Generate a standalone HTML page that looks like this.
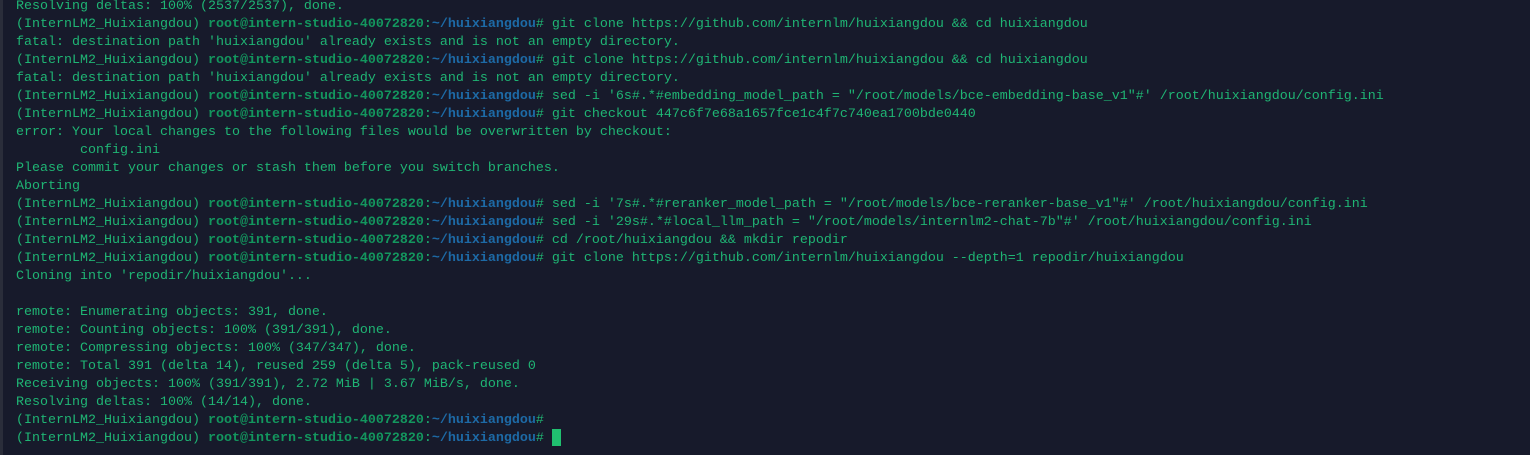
<!DOCTYPE html>
<html><head><meta charset="utf-8"><style>
html,body{margin:0;padding:0;width:1530px;height:455px;overflow:hidden;background:#171a2b;}
body{border-left:3px solid #2a2d3a;box-sizing:border-box;}
pre{margin:0;position:absolute;left:16px;top:-2px;font-family:"Liberation Mono",monospace;font-size:13.33px;line-height:18px;color:#1fb574;}
.u{color:#13965e;font-weight:bold}
.p{color:#1d6aa6;font-weight:bold}
.c{position:absolute;display:block;width:9px;height:17px;background:#20c070;left:536px;top:431px}
</style></head><body><pre>Resolving deltas: 100% (2537/2537), done.
(InternLM2_Huixiangdou) <span class="u">root@intern-studio-40072820</span>:<span class="p">~/huixiangdou</span># git clone https://github.com/internlm/huixiangdou &amp;&amp; cd huixiangdou
fatal: destination path 'huixiangdou' already exists and is not an empty directory.
(InternLM2_Huixiangdou) <span class="u">root@intern-studio-40072820</span>:<span class="p">~/huixiangdou</span># git clone https://github.com/internlm/huixiangdou &amp;&amp; cd huixiangdou
fatal: destination path 'huixiangdou' already exists and is not an empty directory.
(InternLM2_Huixiangdou) <span class="u">root@intern-studio-40072820</span>:<span class="p">~/huixiangdou</span># sed -i '6s#.*#embedding_model_path = "/root/models/bce-embedding-base_v1"#' /root/huixiangdou/config.ini
(InternLM2_Huixiangdou) <span class="u">root@intern-studio-40072820</span>:<span class="p">~/huixiangdou</span># git checkout 447c6f7e68a1657fce1c4f7c740ea1700bde0440
error: Your local changes to the following files would be overwritten by checkout:
        config.ini
Please commit your changes or stash them before you switch branches.
Aborting
(InternLM2_Huixiangdou) <span class="u">root@intern-studio-40072820</span>:<span class="p">~/huixiangdou</span># sed -i '7s#.*#reranker_model_path = "/root/models/bce-reranker-base_v1"#' /root/huixiangdou/config.ini
(InternLM2_Huixiangdou) <span class="u">root@intern-studio-40072820</span>:<span class="p">~/huixiangdou</span># sed -i '29s#.*#local_llm_path = "/root/models/internlm2-chat-7b"#' /root/huixiangdou/config.ini
(InternLM2_Huixiangdou) <span class="u">root@intern-studio-40072820</span>:<span class="p">~/huixiangdou</span># cd /root/huixiangdou &amp;&amp; mkdir repodir
(InternLM2_Huixiangdou) <span class="u">root@intern-studio-40072820</span>:<span class="p">~/huixiangdou</span># git clone https://github.com/internlm/huixiangdou --depth=1 repodir/huixiangdou
Cloning into 'repodir/huixiangdou'...

remote: Enumerating objects: 391, done.
remote: Counting objects: 100% (391/391), done.
remote: Compressing objects: 100% (347/347), done.
remote: Total 391 (delta 14), reused 259 (delta 5), pack-reused 0
Receiving objects: 100% (391/391), 2.72 MiB | 3.67 MiB/s, done.
Resolving deltas: 100% (14/14), done.
(InternLM2_Huixiangdou) <span class="u">root@intern-studio-40072820</span>:<span class="p">~/huixiangdou</span>#
(InternLM2_Huixiangdou) <span class="u">root@intern-studio-40072820</span>:<span class="p">~/huixiangdou</span># <span class="c"></span></pre></body></html>
